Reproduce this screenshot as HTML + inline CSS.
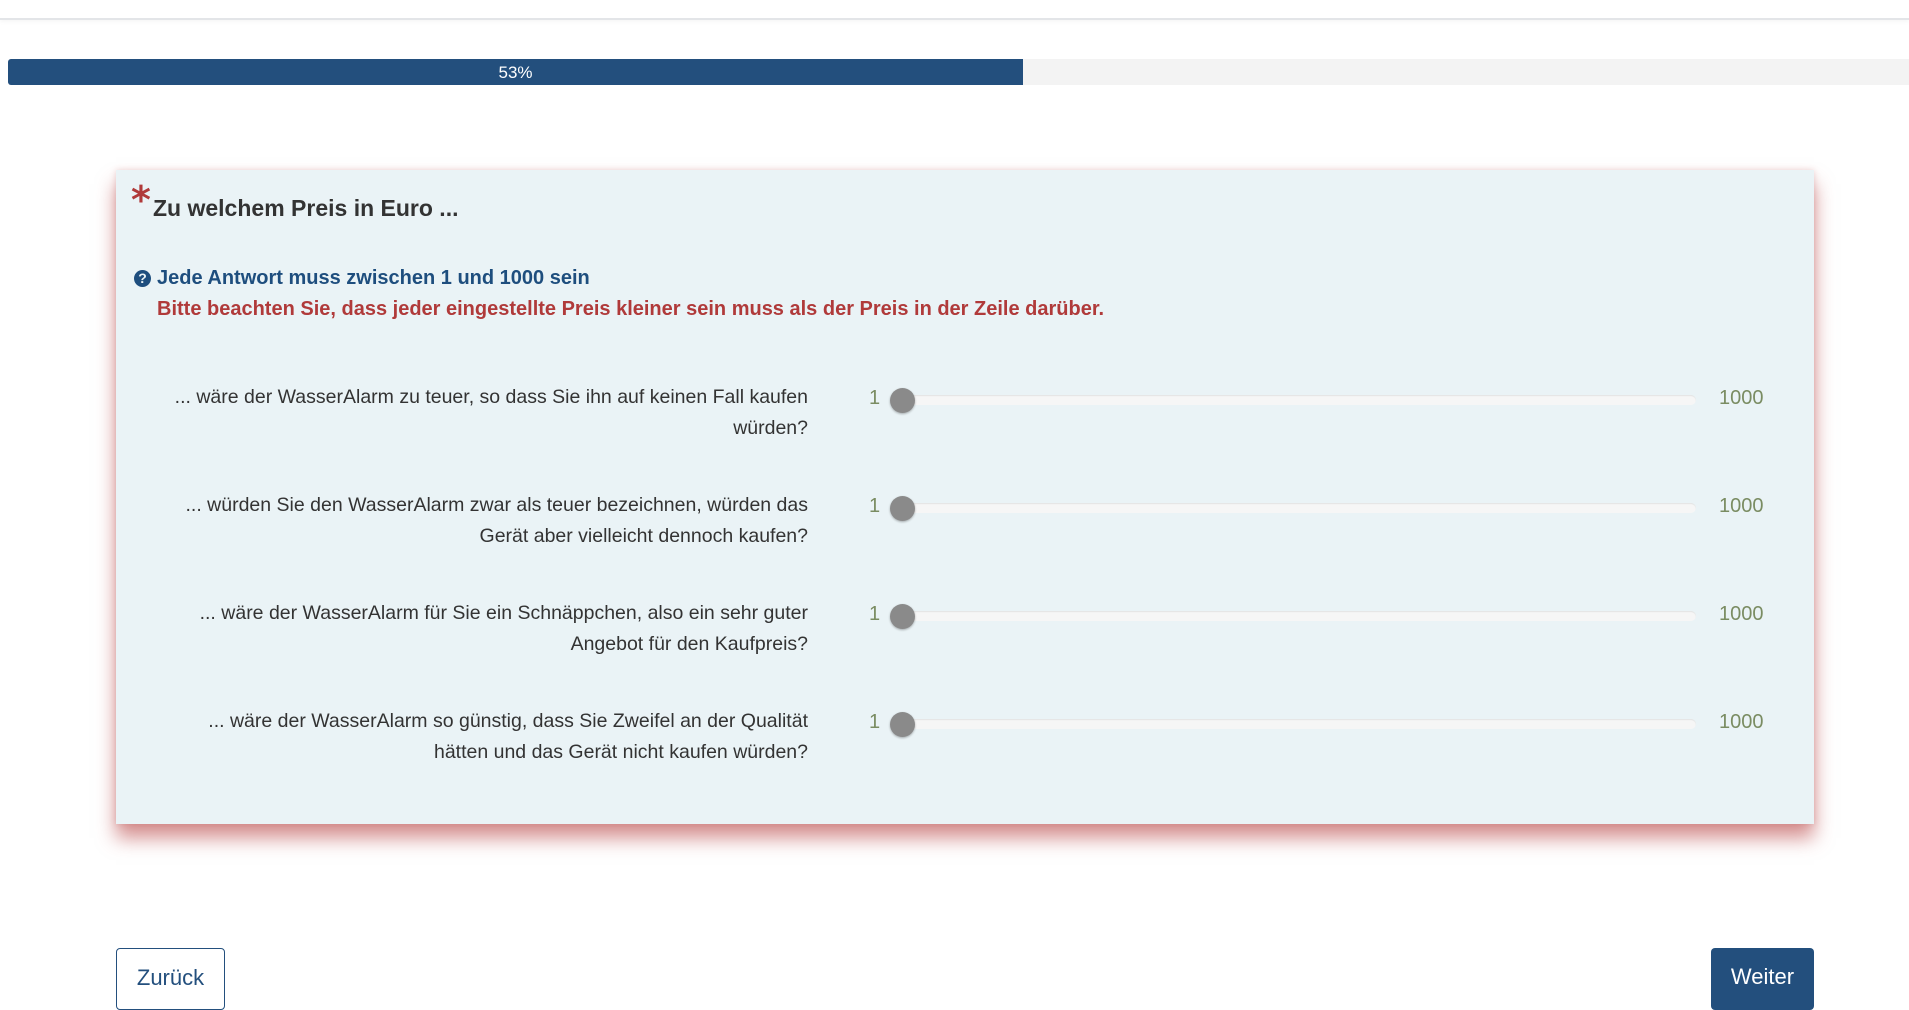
<!DOCTYPE html>
<html><head><meta charset="utf-8"><style>
body{margin:0;width:1909px;height:1000px;overflow:hidden;background:#fff;font-family:"Liberation Sans",Arial,sans-serif;position:relative}
.hdr{position:absolute;left:0;top:0;width:1909px;height:18px;border-bottom:2px solid #e3e5e8;box-shadow:0 2px 4px rgba(0,0,0,.04)}
.pb{position:absolute;left:8px;top:59px;width:1901px;height:26px;background:#f3f3f3;border-radius:3px 0 0 3px}
.pf{position:absolute;left:0;top:0;width:1015px;height:26px;background:#234f7d;border-radius:3px 0 0 3px;color:#fff;font-size:17px;text-align:center;line-height:27px}
.card{position:absolute;left:116px;top:170px;width:1698px;height:654px;background:#eaf3f6;box-shadow:0 14px 18px rgba(185,70,70,.6),0 0 6px rgba(200,120,120,.3)}
.ast{position:absolute;left:131px;top:178px;color:#b03a3a;font-size:38px;font-weight:bold;font-family:"DejaVu Sans",sans-serif}
.title{position:absolute;left:153px;top:195px;font-size:23px;font-weight:bold;color:#333}
.help{position:absolute;left:134px;top:267px;font-size:20px;font-weight:bold;color:#1e4e7e}
.help i{display:inline-block;width:17px;height:17px;border-radius:50%;background:#1e4e7e;color:#eaf3f6;font-style:normal;font-size:14px;text-align:center;line-height:17px;vertical-align:1px;margin-right:6px}
.warn{position:absolute;left:157px;top:298px;font-size:20px;font-weight:bold;color:#b03a3a}
.lab{position:absolute;left:166px;width:642px;text-align:right;font-size:19.5px;line-height:31px;color:#333}
.one{position:absolute;left:869px;font-size:20px;color:#7a8c62}
.k{position:absolute;left:1719px;font-size:20px;color:#7a8c62}
.tr{position:absolute;left:900px;width:796px;height:10px;background:#f6f6f6;border-radius:5px;box-shadow:inset 0 1px 1px rgba(0,0,0,.08)}
.th{position:absolute;left:890px;width:25px;height:25px;border-radius:50%;background:#8a8a8a;box-shadow:0 1px 2px rgba(0,0,0,.3)}
.btn{position:absolute;top:948px;height:62px;font-size:22px;line-height:58px;text-align:center;border-radius:4px;box-sizing:border-box}
</style></head><body>
<div class="hdr"></div>
<div class="pb"><div class="pf">53%</div></div>
<div class="card"></div>
<div class="ast">*</div>
<div class="title">Zu welchem Preis in Euro ...</div>
<div class="help"><i>?</i>Jede Antwort muss zwischen 1 und 1000 sein</div>
<div class="warn">Bitte beachten Sie, dass jeder eingestellte Preis kleiner sein muss als der Preis in der Zeile darüber.</div>

<div class="lab" style="top:382px">... wäre der WasserAlarm zu teuer, so dass Sie ihn auf keinen Fall kaufen würden?</div>
<div class="one" style="top:387px">1</div><div class="tr" style="top:395px"></div><div class="th" style="top:388px"></div><div class="k" style="top:387px">1000</div>

<div class="lab" style="top:490px">... würden Sie den WasserAlarm zwar als teuer bezeichnen, würden das Gerät aber vielleicht dennoch kaufen?</div>
<div class="one" style="top:495px">1</div><div class="tr" style="top:503px"></div><div class="th" style="top:496px"></div><div class="k" style="top:495px">1000</div>

<div class="lab" style="top:598px">... wäre der WasserAlarm für Sie ein Schnäppchen, also ein sehr guter Angebot für den Kaufpreis?</div>
<div class="one" style="top:603px">1</div><div class="tr" style="top:611px"></div><div class="th" style="top:604px"></div><div class="k" style="top:603px">1000</div>

<div class="lab" style="top:706px">... wäre der WasserAlarm so günstig, dass Sie Zweifel an der Qualität hätten und das Gerät nicht kaufen würden?</div>
<div class="one" style="top:711px">1</div><div class="tr" style="top:719px"></div><div class="th" style="top:712px"></div><div class="k" style="top:711px">1000</div>

<div class="btn" style="left:116px;width:109px;border:1px solid #234f7d;color:#234f7d;background:#fff">Zurück</div>
<div class="btn" style="left:1711px;width:103px;background:#234f7d;color:#fff">Weiter</div>
</body></html>
